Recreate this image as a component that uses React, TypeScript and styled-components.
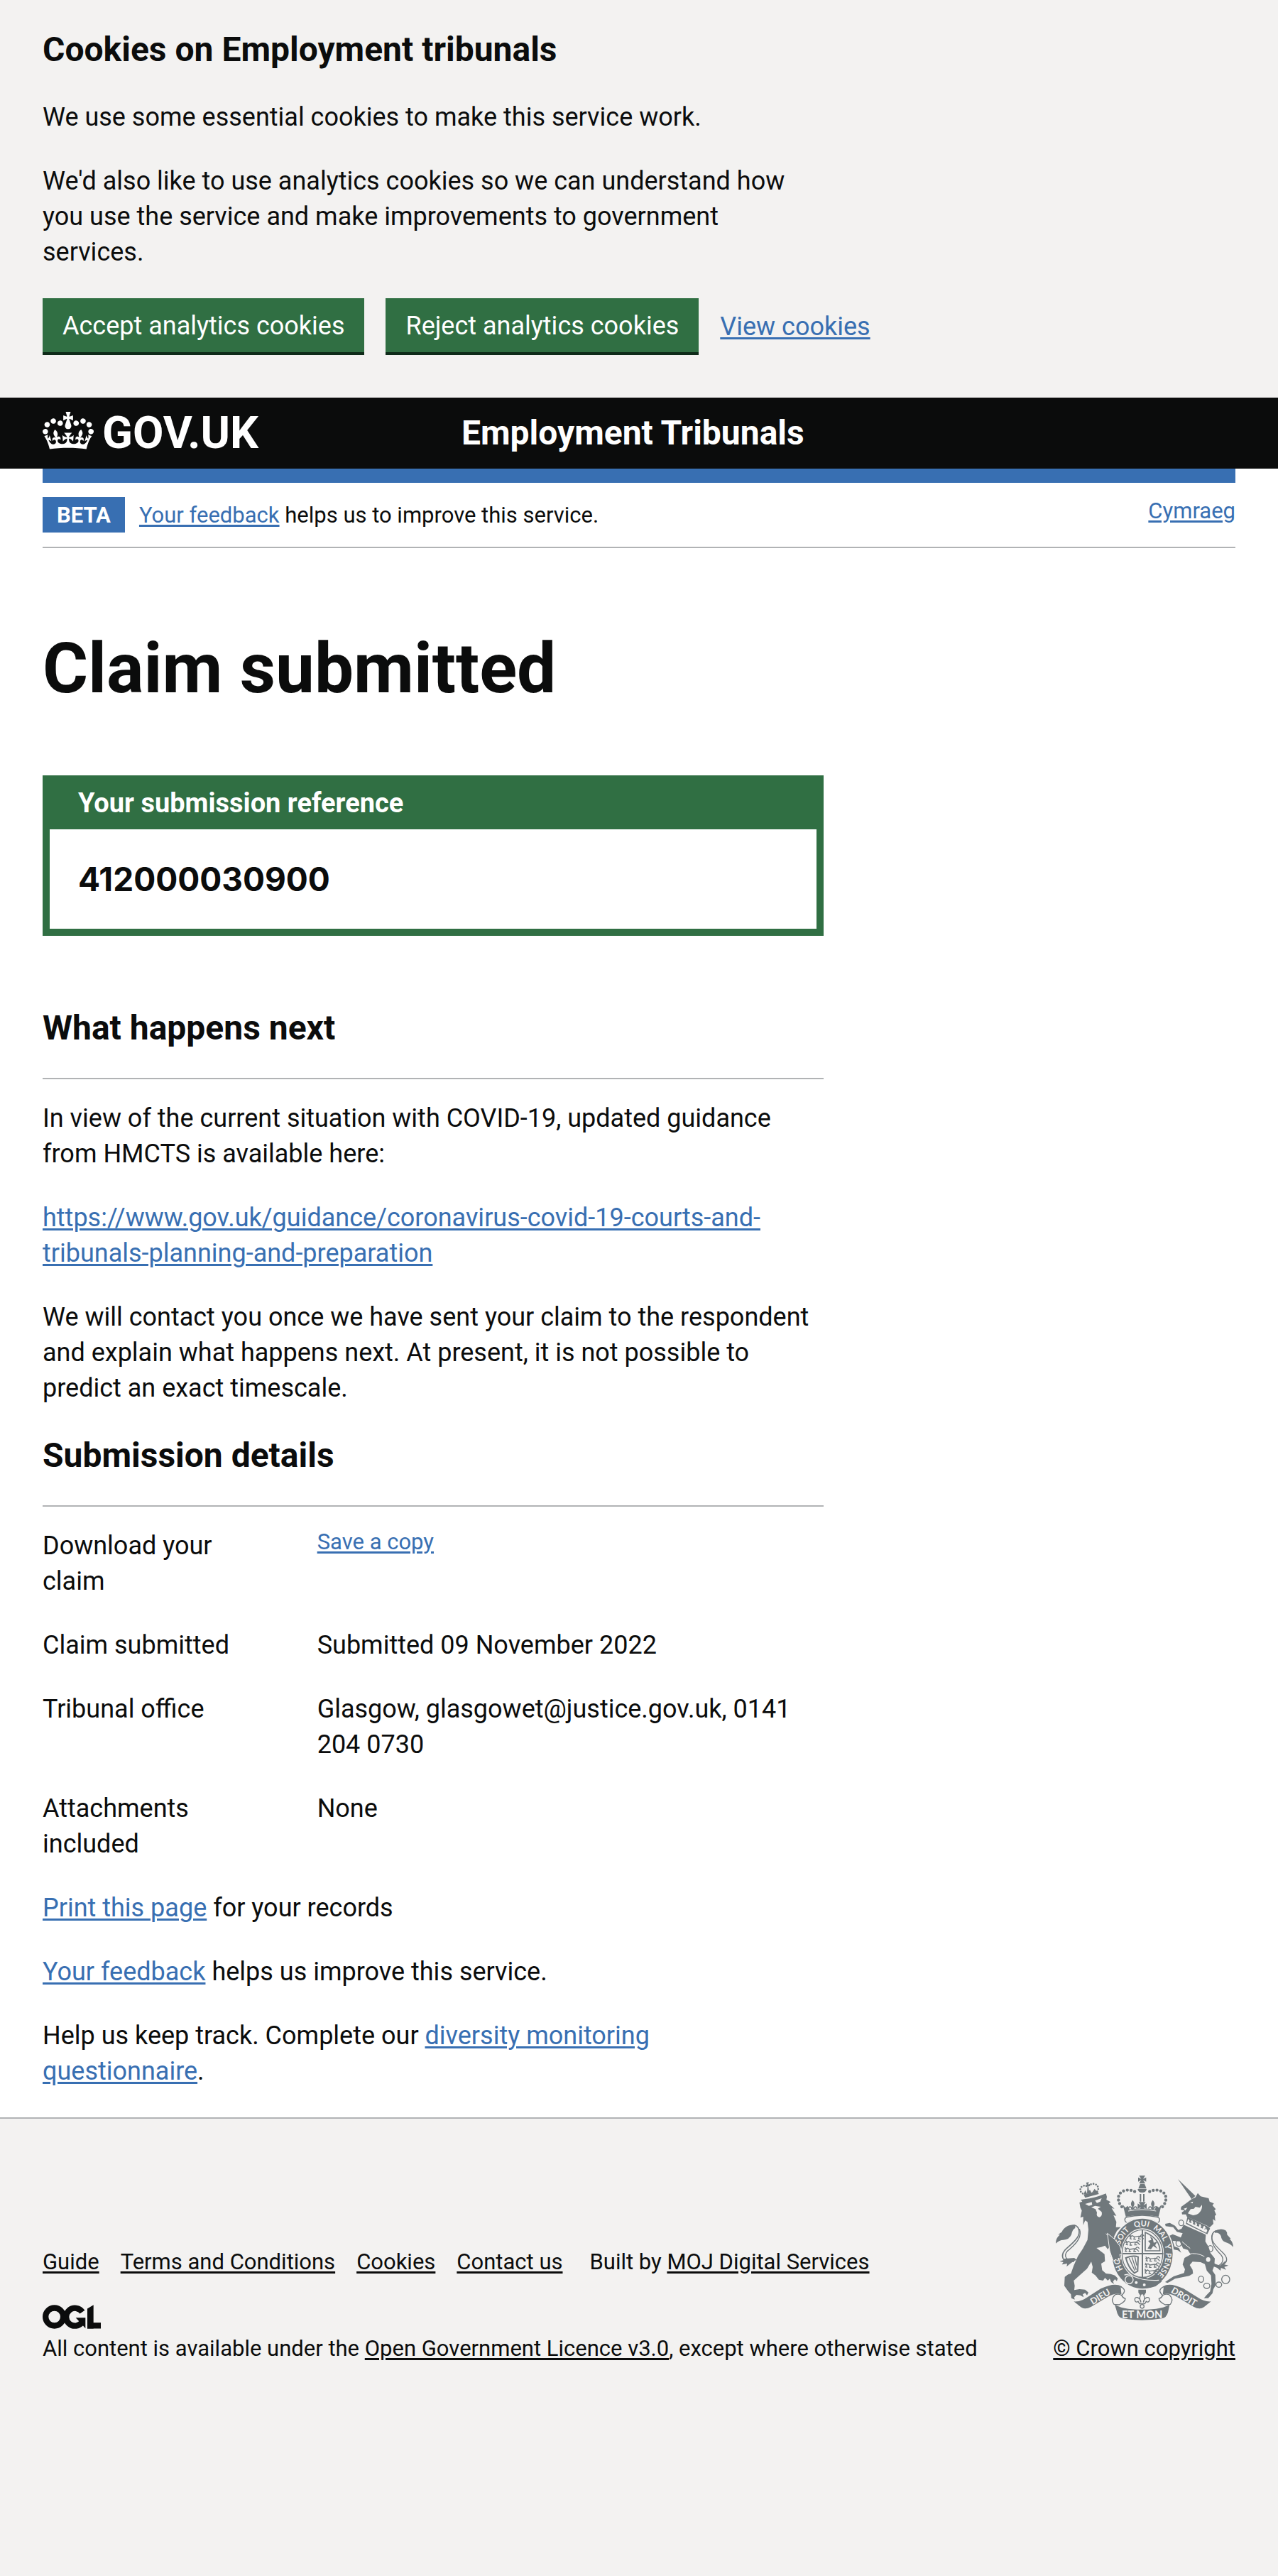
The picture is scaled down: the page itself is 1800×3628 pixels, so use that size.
import React from "react";
import styled, { createGlobalStyle } from "styled-components";

const color = {
  text: "#0b0c0c",
  link: "#386fb2",
  green: "#306f43",
  greenDark: "#0e2b19",
  grey: "#f3f2f1",
  border: "#b1b3b5",
  crest: "#70787c",
  white: "#ffffff",
};

const sans = `Roboto, "Liberation Sans", Arial, sans-serif`;
const figures = `Inter, Roboto, sans-serif`;

const GlobalStyle = createGlobalStyle`
  *, *::before, *::after { box-sizing: border-box; }
  body {
    margin: 0;
    background: ${color.grey};
    color: ${color.text};
    font-family: ${sans};
    font-size: 36px;
    line-height: 50px;
  }
`;

const Container = styled.div`
  margin: 0 60px;
`;

const TwoThirds = styled.div`
  display: grid;
  grid-template-columns: minmax(0, 2fr) minmax(0, 1fr);
  column-gap: 30px;
`;

const Link = styled.a<{ $dark?: boolean }>`
  color: ${(p) => (p.$dark ? color.text : color.link)};
  text-decoration-line: underline;
  text-decoration-thickness: 3px;
  text-underline-offset: 3px;
`;

const Paragraph = styled.p`
  margin: 0 0 40px;
`;

const Heading = styled.h2`
  margin: 0 0 40px;
  font-size: 48px;
  line-height: 60px;
  font-weight: 700;
`;

/* Cookie banner */

const CookieBanner = styled.section`
  padding: 40px 0 60px;
  background: ${color.grey};
`;

const ButtonGroup = styled.div`
  display: flex;
  flex-wrap: wrap;
  align-items: center;
  gap: 30px;
`;

const Button = styled.button`
  margin: 0 0 4px;
  padding: 14px 28px 12px;
  border: 0;
  border-radius: 0;
  background: ${color.green};
  box-shadow: 0 4px 0 ${color.greenDark};
  color: ${color.white};
  font: 400 36px/50px ${sans};
  cursor: pointer;
`;

/* Header */

const Header = styled.header`
  background: ${color.text};
  color: ${color.white};
`;

const HeaderInner = styled(Container)`
  display: flex;
  padding: 20px 0;
`;

const LogoCell = styled.div`
  display: flex;
  flex: 0 0 33.33%;
`;

const LogoLink = styled.a`
  display: flex;
  gap: 12px;
  color: inherit;
  font-size: 63px;
  line-height: 60px;
  font-weight: 700;
  text-decoration: none;
`;

const ServiceName = styled.a`
  padding-left: 30px;
  color: inherit;
  font-size: 48px;
  line-height: 60px;
  font-weight: 700;
  text-decoration: none;
`;

/* Main */

const Page = styled.div`
  overflow: hidden;
  background: ${color.white};
  border-bottom: 2px solid ${color.border};
`;

const PhaseBanner = styled.div`
  display: flex;
  justify-content: space-between;
  align-items: flex-start;
  padding: 20px 0;
  border-top: 20px solid ${color.link};
  border-bottom: 2px solid ${color.border};
  font-size: 31px;
  line-height: 40px;
`;

const Phase = styled.p`
  display: flex;
  align-items: baseline;
  gap: 20px;
  margin: 0;
`;

const Tag = styled.strong`
  padding: 6px 20px 4px;
  background: ${color.link};
  color: ${color.white};
`;

const Title = styled.h1`
  margin: 120px 0 100px;
  font-size: 98px;
  line-height: 100px;
  font-weight: 700;
`;

const Reference = styled.section`
  margin-bottom: 100px;
  border: 10px solid ${color.green};
  border-top: 0;
`;

const ReferenceLabel = styled.h2`
  margin: 0;
  padding: 14px 40px 12px;
  background: ${color.green};
  color: ${color.white};
  font-size: 38px;
  line-height: 50px;
  font-weight: 700;
`;

const ReferenceNumber = styled.p`
  margin: 0;
  padding: 40px;
  font-family: ${figures};
  font-size: 46px;
  line-height: 60px;
  font-weight: 700;
`;

const Rule = styled.hr`
  height: 2px;
  margin: 0 0 30px;
  border: 0;
  background: ${color.border};
`;

const Details = styled.dl`
  margin: 0;
`;

const DetailRow = styled.div`
  display: grid;
  grid-template-columns: minmax(0, 1fr) minmax(0, 2fr);
  column-gap: 30px;
  margin-bottom: 40px;
`;

const Term = styled.dt`
  padding-right: 30px;
`;

const Value = styled.dd<{ $compact?: boolean }>`
  margin: 0;
  font-size: ${(p) => (p.$compact ? "31px" : "inherit")};
  line-height: ${(p) => (p.$compact ? "40px" : "inherit")};
`;

/* Footer */

const Footer = styled.footer`
  padding: 80px 0 50px;
  font-size: 31px;
  line-height: 40px;
`;

const FooterInner = styled(Container)`
  display: flex;
  justify-content: space-between;
  align-items: flex-end;
`;

const FooterLinks = styled.ul`
  display: flex;
  flex-wrap: wrap;
  gap: 30px;
  margin: 0 0 40px;
  padding: 0;
  list-style: none;
`;

const BuiltBy = styled.li`
  margin-left: 8px;
`;

const Licence = styled.p`
  display: flex;
  flex-direction: column;
  gap: 8px;
  margin: 0;
`;

const Copyright = styled.a`
  display: flex;
  flex-direction: column;
  align-items: center;
  gap: 20px;
  color: ${color.text};
  text-decoration-line: underline;
  text-decoration-thickness: 3px;
  text-underline-offset: 3px;
`;

function CrownIcon() {
  return (
    <svg width="72" height="53" viewBox="0 0 132 97" fill="currentColor" aria-hidden="true">
      <path
        fillRule="evenodd"
        d="M25 30.2c3.5 1.5 7.7-.2 9.1-3.7 1.5-3.6-.2-7.8-3.9-9.2-3.6-1.4-7.6.3-9.1 3.9-1.4 3.5.3 7.5 3.9 9zM9 39.5c3.6 1.5 7.8-.2 9.2-3.7 1.5-3.6-.2-7.8-3.9-9.1-3.6-1.5-7.6.2-9.1 3.8-1.4 3.5.3 7.5 3.8 9zM4.4 57.2c3.5 1.5 7.7-.2 9.1-3.8 1.5-3.6-.2-7.7-3.9-9.1-3.5-1.5-7.6.3-9.1 3.8-1.4 3.5.3 7.6 3.9 9.1zm38.3-21.4c3.5 1.5 7.7-.2 9.1-3.8 1.5-3.6-.2-7.7-3.9-9.1-3.6-1.5-7.6.3-9.1 3.8-1.3 3.6.4 7.7 3.9 9.1zm64.4-5.6c-3.6 1.5-7.8-.2-9.1-3.7-1.5-3.6.2-7.8 3.8-9.2 3.6-1.4 7.7.3 9.2 3.9 1.3 3.5-.4 7.5-3.9 9zm15.9 9.3c-3.6 1.5-7.7-.2-9.1-3.7-1.5-3.6.2-7.8 3.7-9.1 3.6-1.5 7.7.2 9.2 3.8 1.5 3.5-.3 7.5-3.8 9zm4.7 17.7c-3.6 1.5-7.8-.2-9.2-3.8-1.5-3.6.2-7.7 3.9-9.1 3.6-1.5 7.7.3 9.2 3.8 1.3 3.5-.4 7.6-3.9 9.1zM89.3 35.8c-3.6 1.5-7.8-.2-9.2-3.8-1.4-3.6.2-7.7 3.9-9.1 3.6-1.5 7.7.3 9.2 3.8 1.4 3.6-.3 7.7-3.9 9.1zM69.7 17.7l8.9 4.7V9.3l-8.9 2.8c-.2-.3-.5-.6-.9-.9L72.4 0H59.6l3.5 11.2c-.3.3-.6.5-.9.9l-8.8-2.8v13.1l8.8-4.7c.3.3.6.7.9.9l-5 15.4v.1c-.2.8-.4 1.6-.4 2.4 0 4.1 3.1 7.5 7 8.1h.2c.3 0 .7.1 1 .1.4 0 .7 0 1-.1h.2c4-.6 7.1-4.1 7.1-8.1 0-.8-.1-1.7-.4-2.4V34l-5.1-15.4c.4-.2.7-.6 1-.9zM66 92.8c16.9 0 32.8 1.1 47.1 3.2 4-16.9 8.9-26.7 14-33.5l-9.6-3.4c1 4.9 1.1 7.2 0 10.2-1.5-1.4-3-4.3-4.2-8.7L108.6 76c2.8-2 5-3.2 7.5-3.3-4.4 9.4-10 11.9-13.6 11.2-4.3-.8-6.3-4.6-5.6-7.9 1-4.7 5.7-5.9 8-.5 4.3-8.7-3-11.4-7.6-8.8 7.1-7.2 7.9-13.5 2.1-21.1-8 6.1-8.1 12.3-4.5 20.8-4.7-5.4-12.1-2.5-9.5 6.2 3.4-5.2 7.9-2 7.2 3.1-.6 4.3-6.4 7.8-13.5 7.2-10.3-.9-10.9-8-11.2-13.8 2.5-.5 7.1 1.8 11 7.3L80.2 60c-4.1 4.4-8 5.3-12.3 5.4 1.4-4.4 8-11.6 8-11.6H55.5s6.4 7.2 7.9 11.6c-4.2-.1-8-1-12.3-5.4l1.4 16.4c3.9-5.5 8.5-7.7 10.9-7.3-.3 5.8-.9 12.8-11.1 13.8-7.2.6-12.9-2.9-13.5-7.2-.7-5 3.8-8.3 7.1-3.1 2.7-8.7-4.6-11.6-9.4-6.2 3.7-8.5 3.6-14.7-4.6-20.8-5.8 7.6-5 13.9 2.2 21.1-4.7-2.6-11.9.1-7.7 8.8 2.3-5.5 7.1-4.2 8.1.5.7 3.3-1.3 7.1-5.7 7.9-3.5.7-9-1.8-13.5-11.2 2.5.1 4.7 1.3 7.5 3.3l-4.7-15.4c-1.2 4.4-2.7 7.2-4.3 8.7-1.1-3-.9-5.3 0-10.2l-9.5 3.4c5 6.9 9.9 16.7 14 33.5 14.8-2.1 30.8-3.2 47.7-3.2z"
      />
    </svg>
  );
}

function LicenceLogo() {
  return (
    <svg width="82" height="34" viewBox="0 0 246 101" role="img" aria-label="OGL">
      <g fill="none" stroke={color.text} strokeWidth="25">
        <circle cx="50" cy="50.500" r="37.500" />
        <path d="M168 30A37.500 37.500 0 1 0 168 72" />
      </g>
      <g fill={color.text}>
        <rect x="189" y="75" width="57" height="25" />
        <polygon points="189,16 215,0 215,100 189,100" />
        <polygon points="140,54 181,54 181,99 171,88 154,69" />
      </g>
    </svg>
  );
}

function Fleur({ x, y }: { x: number; y: number }) {
  return (
    <g transform={`translate(${x} ${y})`}>
      <path d="M0 -22C-9 -12 -9 -4 -3 6L-3 20H3L3 6C9 -4 9 -12 0 -22Z" />
      <path d="M-4 16C-4 4 -18 2 -17 14M4 16C4 4 18 2 17 14" fill="none" stroke={color.crest} strokeWidth="5" />
    </g>
  );
}

function Passant({ x, y }: { x: number; y: number }) {
  return (
    <g transform={`translate(${x} ${y})`} fill="none" stroke={color.crest} strokeWidth="4" strokeLinecap="round">
      <path d="M2 5L14 1L22 6L42 3L54 7M8 6L4 14L10 15M22 7L20 16L27 16M42 5L40 15L48 15M54 7L60 14M48 2C52 -6 60 -4 62 2M6 2L3 -2" />
    </g>
  );
}

function Ring({ x, y, rx, ry }: { x: number; y: number; rx: number; ry: number }) {
  return <ellipse cx={x} cy={y} rx={rx} ry={ry} fill="none" stroke={color.crest} strokeWidth="4" />;
}

function RoyalArms() {
  const words: [string, string][] = [
    ["HO", "18.500%"],
    ["SOIT", "36%"],
    ["QUI", "49.500%"],
    ["MAL", "62%"],
    ["Y", "71%"],
    ["PENSE", "82%"],
  ];
  return (
    <svg width="250" height="204" viewBox="72 72 750 612" fill={color.crest} aria-hidden="true">
      {/* Crown */}
      <path d="M424 72H450L441 86L454 80V98L441 91L450 105H424L433 91L420 98V80L433 86Z" />
      <path d="M429 107H447L451 116L455 127H421L425 116Z" />
      <path d="M418 129H456Q454 144 437 144Q420 144 418 129Z" />
      <path d="M430 150V182M444 150V182" stroke={color.crest} strokeWidth="6" />
      <path
        d="M351 204C330 180 330 145 362 136Q392 128 416 146M523 204C544 180 544 145 512 136Q482 128 458 146"
        fill="none"
        stroke={color.crest}
        strokeWidth="13"
        strokeLinecap="round"
        strokeDasharray="0 16"
      />
      <path d="M355 194L366 208L376 200L384 216Q437 206 490 216L498 200L508 208L519 194L506 246Q437 232 368 246Z" />
      <path d="M422 184H452L443 198L456 190V212L443 206L448 222H426L431 206L418 212V190L431 198Z" />
      <Fleur x={397} y={198} />
      <Fleur x={482} y={198} />
      <path d="M378 222Q437 210 496 222" fill="none" stroke={color.grey} strokeWidth="3" />
      <path
        d="M372 248C360 252 361 268 376 272C396 250 478 250 500 272C514 268 514 252 502 248Q437 232 372 248Z"
        fill={color.grey}
        stroke={color.crest}
        strokeWidth="4"
      />

      {/* Lion */}
      <path
        d="M128 440C95 432 90 402 122 376C158 346 176 324 170 302C166 286 156 280 142 284"
        fill="none"
        stroke={color.crest}
        strokeWidth="5"
      />
      <path
        d="M150 436C104 428 104 402 132 382C168 350 182 326 172 298"
        fill="none"
        stroke={color.crest}
        strokeWidth="4"
      />
      <path d="M154 280C128 278 106 290 98 310L82 322L90 322Q72 336 72 359Q88 344 104 344Q128 344 138 322Q142 300 154 294Z" />
      <path d="M96 404L104 424L150 420L160 428Q140 436 118 457L120 444L98 448L104 438L88 434L104 430Z" />
      <path d="M172 186L184 182L178 174L192 172Q238 166 272 152L284 148L288 162L286 174L304 184L296 190L320 212L308 210L328 242L316 240L328 268L326 290L346 290L330 306L318 330L334 366L344 384L350 402L340 404L346 424L334 420L336 432L324 424L318 432L312 416L304 414L308 402L300 390L306 376L298 374L292 384L280 368L264 374L244 378L278 404L280 434L264 444L268 472L284 486L304 488L322 494L334 506L330 518L322 510L314 520L318 530L306 522L300 508L292 516L280 504L272 516L254 512L240 494L224 482L228 458L222 436L204 466L172 494L148 516L152 538L150 556L172 552L196 554L210 566L204 578L196 568L186 574L190 586L176 578L160 576L150 586L152 596L138 590L136 574L124 560L108 538L110 500L124 490L136 486L148 452L166 412L186 382L206 344L210 300L206 268L196 262L188 282L188 246L176 250L182 220L176 208Z" />
      <path
        d="M196 192L224 184L226 196L212 200ZM238 178L266 168L260 182L246 188ZM222 206L238 200L262 204L250 212L266 226Q270 246 256 248Q242 246 246 228L240 214Z"
        fill={color.grey}
      />
      <path d="M284 318L340 366M300 372L318 384" stroke={color.grey} strokeWidth="3" />
      <path d="M190 152L248 138L254 150L196 166Z" />
      <path
        d="M186 148C170 140 174 120 188 116Q198 112 206 118Q222 104 238 108C252 114 256 130 246 140"
        fill="none"
        stroke={color.crest}
        strokeWidth="8"
        strokeLinecap="round"
        strokeDasharray="0 11"
      />
      <path d="M200 102L212 100L208 110L216 108L217 118L209 115L214 146L204 148L206 118L198 121L197 112L204 113Z" />
      <path d="M190 152L196 134L204 148L216 132L224 146L236 128L246 140Z" />

      {/* Unicorn */}
      <path
        d="M776 448C800 440 800 418 776 396C744 366 726 346 732 324C738 306 752 302 766 306"
        fill="none"
        stroke={color.crest}
        strokeWidth="4"
      />
      <path
        d="M758 454C784 440 784 418 762 398C736 372 724 346 736 316"
        fill="none"
        stroke={color.crest}
        strokeWidth="4"
      />
      <path d="M744 306Q770 292 790 304Q798 312 796 322L812 340L806 340Q822 354 822 374Q806 358 790 354Q772 348 770 328Q764 312 744 314Z" />
      <path d="M748 446L736 440L738 456L754 462L768 474L770 462L792 470L784 458L802 452L784 448L792 430L766 452Z" />
      <path d="M588 87L662 158L646 172Z" />
      <path d="M646 172L662 164L672 146L684 160L718 168L722 182L740 190L734 198L748 214L742 220L750 238L744 242L746 264L736 256L738 276L722 292L712 284L626 246L622 236L606 236L604 228L616 220L600 216L602 204L622 190Z" />
      <path d="M690 196C692 220 676 240 652 240L630 232L642 214L656 212L662 204L680 208ZM640 186L652 182L650 190ZM612 212L628 208L620 220Z" fill={color.grey} />
      <path d="M628 246L716 288L724 296L712 320L622 276Z" fill={color.crest} />
      <path d="M632 254L640 268L648 260L656 276L664 268L672 284L682 276L690 292L700 284L712 304L708 314L626 272Z" fill={color.grey} />
      <path d="M636 266L704 298" stroke={color.crest} strokeWidth="6" strokeDasharray="10 8" />
      <path d="M612 280L706 322L704 350L718 374L726 400L744 422L742 452L734 474L746 492L748 534L738 552L734 570L716 590L698 590L708 578L724 562L730 530L728 494L710 474L702 446L684 438L650 436L638 450L650 470L652 486L636 496L576 508L556 520L544 526L534 522L548 512L570 498L614 484L618 468L608 448L616 420L642 406L630 386L610 380L596 350L566 348L574 372L592 378L602 398L588 388L568 384L554 350L540 342L550 328L566 320L582 326L600 334L608 316L584 310L568 290L536 286L534 276L554 272L576 284L590 302L604 296Z" />
      <path d="M606 352L640 380M632 404Q668 396 700 414" stroke={color.grey} strokeWidth="3" fill="none" />
      <Ring x={602} y={272} rx={10} ry={12} />
      <Ring x={592} y={357} rx={12} ry={14} />
      <ellipse cx={716} cy={427} rx="9" ry="10" fill={color.grey} />
      <ellipse cx={694} cy={461} rx="9" ry="10" fill={color.grey} />
      <Ring x={725} y={381} rx={11} ry={13} />
      <Ring x={686} y={510} rx={11} ry={13} />
      <Ring x={710} y={538} rx={13} ry={11} />
      <Ring x={761} y={533} rx={12} ry={11} />
      <Ring x={790} y={511} rx={17} ry={18} />

      {/* Garter and motto */}
      <ellipse cx="438" cy="402" rx="133" ry="152" fill={color.grey} />
      <ellipse cx="438" cy="402" rx="128" ry="148" />
      <ellipse cx="438" cy="402" rx="91" ry="107" fill={color.grey} />
      <defs>
        <path id="garter-line" d="M438 518A99 116 0 0 1 438 286A99 116 0 0 1 438 518" />
      </defs>
      <g fill={color.grey} fontFamily="Lato, sans-serif" fontWeight="700" fontSize="33" textAnchor="middle">
        {words.map(([word, offset]) => (
          <text key={word}>
            <textPath href="#garter-line" startOffset={offset}>
              {word}
            </textPath>
          </text>
        ))}
      </g>

      {/* Shield */}
      <ellipse cx="438" cy="402" rx="86" ry="101" fill="none" stroke={color.crest} strokeWidth="4" />
      <path d="M350 402H526M438 300V505" stroke={color.crest} strokeWidth="6" />
      <Passant x={382} y={325} />
      <Passant x={366} y={350} />
      <Passant x={362} y={378} />
      <Passant x={450} y={418} />
      <Passant x={448} y={444} />
      <Passant x={446} y={470} />
      <path d="M450 312V390H512Q512 340 450 312Z" fill="none" stroke={color.crest} strokeWidth="5" />
      <path d="M460 380L472 360L462 348L476 344L470 328L482 338L486 356L502 350L492 366L502 382L484 370L474 384Z" />
      <path d="M368 420Q400 408 420 416L418 476L404 484Q378 460 368 420Z" fill="none" stroke={color.crest} strokeWidth="6" />
      <path d="M382 420L406 474M394 418L412 470M406 416L414 452" stroke={color.crest} strokeWidth="4" />
      <path d="M424 500H452L462 512H414Z" />

      {/* Lion's paw over the garter */}
      <path
        d="M290 316L322 342L344 372L352 404L342 406L348 426L336 421L336 434L324 426L316 434L308 414L300 390Z"
        stroke={color.grey}
        strokeWidth="3"
      />

      {/* Belt end */}
      <path d="M360 486L376 484L402 496Q450 520 506 512L520 520L494 540Q438 560 388 534L368 528Z" />
      <path d="M362 492L384 488L400 498Q446 518 508 514" fill="none" stroke={color.grey} strokeWidth="4" />
      <circle cx="382" cy="512" r="17" fill="none" stroke={color.grey} strokeWidth="4" />
      <circle cx="412" cy="524" r="6" fill={color.grey} />
      <circle cx="446" cy="534" r="6" fill={color.grey} />

      {/* Scroll */}
      <path d="M148 604Q178 606 206 586L262 550Q320 522 350 540Q362 552 352 574L340 572Q316 570 286 588L222 626Q196 640 178 628Z" />
      <path d="M728 604Q698 606 670 586L612 550Q554 522 526 540Q514 552 522 574L536 572Q560 570 590 588L654 626Q680 640 698 628Z" />
      <path d="M346 542Q376 556 350 578Q356 590 366 592Q366 606 340 618L318 616Q302 596 322 576Q336 570 350 578M528 542Q498 556 524 578Q518 590 508 592Q508 606 534 618L556 616Q572 596 552 576Q538 570 524 578" fill={color.grey} stroke={color.crest} strokeWidth="4" />
      <path d="M320 614Q346 638 437 638Q528 638 554 614L546 650Q540 672 520 676Q437 690 354 676Q334 672 328 640Z" />
      <g fill={color.grey} fontFamily="Lato, sans-serif" fontWeight="700" textAnchor="middle">
        <text fontSize="44" x="437" y="675">
          ET MON
        </text>
        <text fontSize="38" x="0" y="13" transform="translate(260 584) rotate(-31)">
          DIEU
        </text>
        <text fontSize="38" x="0" y="13" transform="translate(614 584) rotate(31)">
          DROIT
        </text>
      </g>

      {/* Fleur-de-lis badge */}
      <path d="M421 554H453V566L447 576H427L421 566Z" />
      <g fill={color.grey} stroke={color.crest} strokeWidth="4">
        <path d="M437 568C424 582 424 594 432 608C428 584 404 580 406 598C408 608 416 608 420 604L426 614H448L454 604C458 608 466 608 468 598C470 580 446 584 442 608C450 594 450 582 437 568Z" />
        <circle cx="437" cy="625" r="8" />
      </g>
    </svg>
  );
}

const footerLinks = ["Guide", "Terms and Conditions", "Cookies", "Contact us"];

export default function App() {
  return (
    <>
      <GlobalStyle />
      <CookieBanner aria-label="Cookies on Employment tribunals">
        <Container>
          <TwoThirds>
            <div>
              <Heading>Cookies on Employment tribunals</Heading>
              <Paragraph>We use some essential cookies to make this service work.</Paragraph>
              <Paragraph>
                We'd also like to use analytics cookies so we can understand how you use the service and make
                improvements to government services.
              </Paragraph>
            </div>
          </TwoThirds>
          <ButtonGroup>
            <Button type="button">Accept analytics cookies</Button>
            <Button type="button">Reject analytics cookies</Button>
            <Link href="#cookies">View cookies</Link>
          </ButtonGroup>
        </Container>
      </CookieBanner>

      <Header>
        <HeaderInner>
          <LogoCell>
            <LogoLink href="#home">
              <CrownIcon />
              GOV.UK
            </LogoLink>
          </LogoCell>
          <ServiceName href="#service">Employment Tribunals</ServiceName>
        </HeaderInner>
      </Header>

      <Page>
        <Container>
          <PhaseBanner>
            <Phase>
              <Tag>BETA</Tag>
              <span>
                <Link href="#feedback">Your feedback</Link> helps us to improve this service.
              </span>
            </Phase>
            <Link href="#cy" lang="cy">
              Cymraeg
            </Link>
          </PhaseBanner>

          <main>
            <Title>Claim submitted</Title>
            <TwoThirds>
              <div>
                <Reference>
                  <ReferenceLabel>Your submission reference</ReferenceLabel>
                  <ReferenceNumber>412000030900</ReferenceNumber>
                </Reference>

                <Heading>What happens next</Heading>
                <Rule />
                <Paragraph>
                  In view of the current situation with COVID-19, updated guidance from HMCTS is available here:
                </Paragraph>
                <Paragraph>
                  <Link href="#guidance">
                    https://www.gov.uk/guidance/coronavirus-covid-19-courts-and-tribunals-planning-and-preparation
                  </Link>
                </Paragraph>
                <Paragraph>
                  We will contact you once we have sent your claim to the respondent and explain what happens next. At
                  present, it is not possible to predict an exact timescale.
                </Paragraph>

                <Heading>Submission details</Heading>
                <Rule />
                <Details>
                  <DetailRow>
                    <Term>Download your claim</Term>
                    <Value $compact>
                      <Link href="#download">Save a copy</Link>
                    </Value>
                  </DetailRow>
                  <DetailRow>
                    <Term>Claim submitted</Term>
                    <Value>Submitted 09 November 2022</Value>
                  </DetailRow>
                  <DetailRow>
                    <Term>Tribunal office</Term>
                    <Value>Glasgow, glasgowet@justice.gov.uk, 0141 204 0730</Value>
                  </DetailRow>
                  <DetailRow>
                    <Term>Attachments included</Term>
                    <Value>None</Value>
                  </DetailRow>
                </Details>

                <Paragraph>
                  <Link href="#print">Print this page</Link> for your records
                </Paragraph>
                <Paragraph>
                  <Link href="#feedback">Your feedback</Link> helps us improve this service.
                </Paragraph>
                <Paragraph>
                  Help us keep track. Complete our{" "}
                  <Link href="#diversity">
                    diversity monitoring
                    <br />
                    questionnaire
                  </Link>
                  .
                </Paragraph>
              </div>
            </TwoThirds>
          </main>
        </Container>
      </Page>

      <Footer>
        <FooterInner>
          <div>
            <FooterLinks>
              {footerLinks.map((label) => (
                <li key={label}>
                  <Link $dark href="#footer">
                    {label}
                  </Link>
                </li>
              ))}
              <BuiltBy>
                Built by{" "}
                <Link $dark href="#moj">
                  MOJ Digital Services
                </Link>
              </BuiltBy>
            </FooterLinks>
            <Licence>
              <LicenceLogo />
              <span>
                All content is available under the{" "}
                <Link $dark href="#ogl">
                  Open Government Licence v3.0
                </Link>
                , except where otherwise stated
              </span>
            </Licence>
          </div>
          <Copyright href="#copyright">
            <RoyalArms />
            <span>© Crown copyright</span>
          </Copyright>
        </FooterInner>
      </Footer>
    </>
  );
}
